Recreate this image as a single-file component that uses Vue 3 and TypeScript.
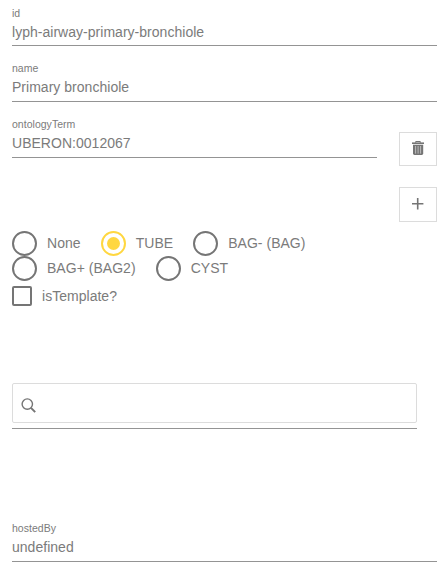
<script setup lang="ts">
import { ref } from 'vue'

const id = ref('lyph-airway-primary-bronchiole')
const name = ref('Primary bronchiole')
const ontologyTerm = ref('UBERON:0012067')
const hostedBy = ref('undefined')
const search = ref('')
const isTemplate = ref(false)
const topology = ref('TUBE')
const topologyRows: string[][] = [
  ['None', 'TUBE', 'BAG- (BAG)'],
  ['BAG+ (BAG2)', 'CYST'],
]
</script>

<template>
  <form class="panel" @submit.prevent>
    <label class="field field-id">
      <span class="caption">id</span>
      <input v-model="id" class="value" type="text" />
    </label>
    <label class="field field-name">
      <span class="caption">name</span>
      <input v-model="name" class="value" type="text" />
    </label>
    <div class="term-row">
      <label class="field">
        <span class="caption">ontologyTerm</span>
        <input v-model="ontologyTerm" class="value" type="text" />
      </label>
      <button class="icon-button" type="button" aria-label="Delete">
        <svg width="14" height="16" viewBox="0 0 14 16">
          <path d="M4.7 1.8V.5h4.6v1.3" fill="none" stroke="#757575" />
          <path d="M1 1.4h12v1.6H1z" fill="#757575" />
          <path d="M2 3.8h10.2v8.8q0 1.4-1.4 1.4H3.4Q2 14 2 12.6z" fill="#757575" />
          <path d="M4.6 5v7.6M7.1 5v7.6M9.6 5v7.6" stroke="#c4c4c4" stroke-width=".9" />
        </svg>
      </button>
    </div>
    <button class="icon-button add" type="button" aria-label="Add">
      <svg width="12" height="12" viewBox="0 0 12 12">
        <path d="M5.7 0v11.4M0 5.7h11.4" stroke="#757575" stroke-width="1.6" />
      </svg>
    </button>
    <div class="topology">
      <div v-for="(row, i) in topologyRows" :key="i" class="radio-row">
        <label v-for="option in row" :key="option" class="radio">
          <input v-model="topology" class="native" type="radio" name="topology" :value="option" />
          <span class="ring"></span>
          <span class="option">{{ option }}</span>
        </label>
      </div>
    </div>
    <label class="check">
      <input v-model="isTemplate" class="box" type="checkbox" />
      <span>isTemplate?</span>
    </label>
    <div class="search-field">
      <label class="search">
        <svg width="15" height="15" viewBox="0 0 15 15" fill="none" stroke="#757575">
          <circle cx="6.3" cy="6.1" r="5.2" stroke-width="1.4" />
          <path d="M10 9.9l4.2 4.2" stroke-width="2" />
        </svg>
        <input v-model="search" class="query" type="text" aria-label="Search" />
      </label>
    </div>
    <label class="field">
      <span class="caption">hostedBy</span>
      <input v-model="hostedBy" class="value" type="text" />
    </label>
  </form>
</template>

<style>
body {
  background: #fff;
  overflow: hidden;
}
</style>

<style scoped>
.panel {
  box-sizing: border-box;
  width: 445px;
  padding: 6px 8px 0 12px;
  display: flex;
  flex-direction: column;
  font: 14px/18px "Liberation Sans", Arial, sans-serif;
  letter-spacing: 0.025px;
  color: #7b7b7b;
}
.field {
  box-sizing: border-box;
  display: flex;
  flex-direction: column;
  height: 41px;
  border-bottom: 1px solid #949494;
}
.field-id {
  height: 40px;
}
.field-name {
  margin: 15px 0;
}
.caption {
  font-size: 10.5px;
  line-height: 14px;
  height: 17px;
}
.value,
.query {
  border: 0;
  padding: 0;
  margin: 0;
  min-width: 0;
  width: 100%;
  height: 18px;
  outline: 0;
  background: transparent;
  color: inherit;
  font: inherit;
  letter-spacing: inherit;
}
.term-row {
  display: flex;
  justify-content: space-between;
  height: 49px;
}
.term-row .field {
  width: 365px;
}
.icon-button {
  box-sizing: border-box;
  display: flex;
  align-items: center;
  justify-content: center;
  width: 38px;
  height: 34px;
  padding: 0;
  border: 1px solid #dcdcdc;
  background: #fff;
}
.term-row .icon-button {
  margin-top: 15px;
}
.add {
  align-self: flex-end;
  height: 35px;
  margin-top: 21px;
  padding-bottom: 1px;
}
.topology {
  margin-top: 9px;
}
.radio-row {
  display: flex;
  gap: 20.1px;
  height: 25px;
}
.radio {
  display: flex;
  align-items: center;
  gap: 10px;
  white-space: nowrap;
}
.option {
  padding-bottom: 1px;
}
.native {
  appearance: none;
  width: 0;
  height: 0;
  margin: 0 -10px 0 0;
}
.ring {
  box-sizing: border-box;
  display: flex;
  align-items: center;
  justify-content: center;
  width: 25px;
  height: 25px;
  border: 2px solid #757575;
  border-radius: 50%;
}
.native:checked + .ring {
  border-color: #ffd740;
}
.native:checked + .ring::after {
  content: "";
  width: 13px;
  height: 13px;
  border-radius: 50%;
  background: #ffd740;
}
.check {
  display: flex;
  align-items: center;
  gap: 10px;
  height: 20px;
  margin-top: 5px;
}
.box {
  appearance: none;
  box-sizing: border-box;
  width: 20px;
  height: 20px;
  margin: 0;
  border: 2px solid #757575;
  border-radius: 2px;
}
.box:checked {
  background: #ffd740;
}
.search-field {
  box-sizing: border-box;
  width: 405px;
  height: 46px;
  margin: 77px 0 92px;
  border-bottom: 1px solid #949494;
}
.search {
  box-sizing: border-box;
  display: flex;
  align-items: center;
  gap: 8px;
  height: 40px;
  padding: 5px 8px 0;
  border: 1px solid #dcdcdc;
  border-radius: 2px;
}
.search svg {
  flex: none;
}
</style>
